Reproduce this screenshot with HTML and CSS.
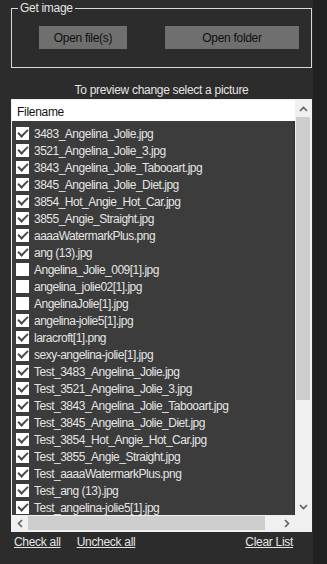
FILE: index.html
```html
<!DOCTYPE html>
<html lang="en">
<head>
    <meta charset="UTF-8">
    <title>Get image</title>
    <link rel="stylesheet" href="styles.css">
</head>
<body>
    <div class="form">
        <fieldset class="group">
            <legend>Get image</legend>
            <div class="group-buttons">
                <button class="btn btn-files">Open file(s)</button>
                <button class="btn btn-folder">Open folder</button>
            </div>
        </fieldset>

        <p class="hint">To preview change select a picture</p>

        <div class="list">
            <div class="list-main">
                <div class="list-header">Filename</div>
                <ul class="rows">
                    <li><span class="check on"></span>3483_Angelina_Jolie.jpg</li>
                    <li><span class="check on"></span>3521_Angelina_Jolie_3.jpg</li>
                    <li><span class="check on"></span>3843_Angelina_Jolie_Tabooart.jpg</li>
                    <li><span class="check on"></span>3845_Angelina_Jolie_Diet.jpg</li>
                    <li><span class="check on"></span>3854_Hot_Angie_Hot_Car.jpg</li>
                    <li><span class="check on"></span>3855_Angie_Straight.jpg</li>
                    <li><span class="check on"></span>aaaaWatermarkPlus.png</li>
                    <li><span class="check on"></span>ang (13).jpg</li>
                    <li><span class="check"></span>Angelina_Jolie_009[1].jpg</li>
                    <li><span class="check"></span>angelina_jolie02[1].jpg</li>
                    <li><span class="check"></span>AngelinaJolie[1].jpg</li>
                    <li><span class="check on"></span>angelina-jolie5[1].jpg</li>
                    <li><span class="check on"></span>laracroft[1].png</li>
                    <li><span class="check on"></span>sexy-angelina-jolie[1].jpg</li>
                    <li><span class="check on"></span>Test_3483_Angelina_Jolie.jpg</li>
                    <li><span class="check on"></span>Test_3521_Angelina_Jolie_3.jpg</li>
                    <li><span class="check on"></span>Test_3843_Angelina_Jolie_Tabooart.jpg</li>
                    <li><span class="check on"></span>Test_3845_Angelina_Jolie_Diet.jpg</li>
                    <li><span class="check on"></span>Test_3854_Hot_Angie_Hot_Car.jpg</li>
                    <li><span class="check on"></span>Test_3855_Angie_Straight.jpg</li>
                    <li><span class="check on"></span>Test_aaaaWatermarkPlus.png</li>
                    <li><span class="check on"></span>Test_ang (13).jpg</li>
                    <li><span class="check on"></span>Test_angelina-jolie5[1].jpg</li>
                </ul>
            </div>
            <div class="vscroll">
                <div class="arrow">
                    <svg width="9" height="6" viewBox="0 0 9 6"><path d="M1 5 L4.5 1.5 L8 5" fill="none" stroke="#606060" stroke-width="1.6"/></svg>
                </div>
                <div class="vthumb"></div>
                <div class="track"></div>
                <div class="arrow">
                    <svg width="9" height="6" viewBox="0 0 9 6"><path d="M1 1 L4.5 4.5 L8 1" fill="none" stroke="#606060" stroke-width="1.6"/></svg>
                </div>
            </div>
            <div class="hscroll">
                <div class="arrow">
                    <svg width="6" height="9" viewBox="0 0 6 9"><path d="M5 1 L1.5 4.5 L5 8" fill="none" stroke="#606060" stroke-width="1.6"/></svg>
                </div>
                <div class="hthumb"></div>
                <div class="track"></div>
                <div class="arrow">
                    <svg width="6" height="9" viewBox="0 0 6 9"><path d="M1 1 L4.5 4.5 L1 8" fill="none" stroke="#606060" stroke-width="1.6"/></svg>
                </div>
            </div>
            <div class="corner"></div>
        </div>

        <div class="links">
            <a href="#" class="link">Check all</a>
            <a href="#" class="link">Uncheck all</a>
            <a href="#" class="link link-clear">Clear List</a>
        </div>
    </div>
    <div class="edge"></div>
</body>
</html>
```

FILE: styles.css
```css
*{
    margin: 0;
    padding: 0;
    box-sizing: border-box;
}
body{
    display: flex;
    height: 564px;
    background-color: #2c2c2c;
    font-family: "Liberation Sans", Arial, sans-serif;
    font-size: 12px;
    letter-spacing: -0.3px;
    color: #e4e4e4;
}
.form{
    width: 313px;
    padding: 1px 1px 0 11px;
}
.edge{
    flex: 1;
    background-color: #212121;
}
.group{
    border: 1px solid #d8d8d8;
    padding: 11px 0 18px 0;
}
.group legend{
    margin-left: 6px;
    padding: 0 2px;
    line-height: 14px;
    color: #e4e4e4;
}
.group-buttons{
    display: flex;
    gap: 38px;
    padding-left: 27px;
}
.btn{
    height: 23px;
    border: none;
    background-color: #6f6f6f;
    color: #111;
    font-family: inherit;
    font-size: 12px;
    letter-spacing: -0.3px;
}
.btn-files{
    width: 88px;
}
.btn-folder{
    width: 134px;
}
.hint{
    margin: 15px 0 2px;
    line-height: 14px;
    text-align: center;
}
.list{
    height: 433px;
    border: 1px solid #f0f0f0;
    display: grid;
    grid-template-columns: 1fr 16px;
    grid-template-rows: 1fr 16px;
    background-color: #f0f0f0;
}
.list-main{
    display: flex;
    flex-direction: column;
    background-color: #3c3c3c;
    overflow: hidden;
}
.list-header{
    height: 21px;
    line-height: 24px;
    padding-left: 5px;
    background-color: #fff;
    color: #111;
}
.rows{
    list-style: none;
    padding-top: 4px;
    border-right: 1px solid #2e2e2e;
}
.rows li{
    height: 17px;
    display: flex;
    align-items: center;
    gap: 5px;
    padding-left: 4px;
    white-space: nowrap;
    letter-spacing: -0.5px;
}
.check{
    position: relative;
    width: 13px;
    height: 13px;
    flex-shrink: 0;
    background-color: #fff;
}
.check.on::after{
    content: "";
    position: absolute;
    left: 2px;
    top: 2px;
    width: 8px;
    height: 4px;
    border-left: 2px solid #4a4a4a;
    border-bottom: 2px solid #4a4a4a;
    transform: rotate(-45deg);
}
.vscroll{
    grid-row: 1 / 3;
    grid-column: 2;
    display: flex;
    flex-direction: column;
    height: 415px;
}
.vscroll .arrow{
    height: 17px;
}
.arrow{
    display: flex;
    align-items: center;
    justify-content: center;
    background-color: #f0f0f0;
}
.vthumb{
    height: 283px;
    margin: 0 1px;
    background-color: #cdcdcd;
}
.track{
    flex: 1;
    background-color: #f0f0f0;
}
.hscroll{
    display: flex;
}
.hscroll .arrow{
    width: 16px;
}
.hthumb{
    width: 237px;
    margin: 1px 0;
    background-color: #cdcdcd;
}
.corner{
    background-color: #f0f0f0;
}
.links{
    display: flex;
    gap: 16px;
    padding: 3px 19px 0 3px;
    line-height: 14px;
}
.link{
    color: #e4e4e4;
}
.link-clear{
    margin-left: auto;
}
```
